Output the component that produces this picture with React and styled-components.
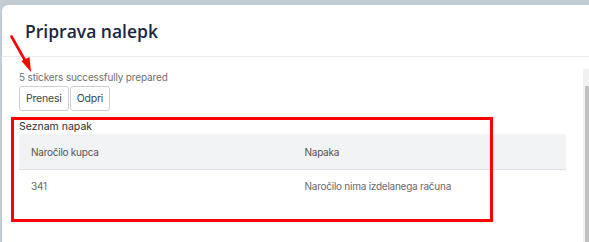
import React from "react";
import styled, { createGlobalStyle } from "styled-components";

const Global = createGlobalStyle`
  html, body { margin: 0; padding: 0; }
  body {
    background: #c3cbd4;
    font-family: Inter, "Open Sans", sans-serif;
    overflow: hidden;
  }
`;

const Stage = styled.div`
  position: relative;
  width: 589px;
  height: 242px;
  overflow: hidden;
  padding: 5px 0 0 2px;
  box-sizing: border-box;
`;

const Modal = styled.div`
  background: #ffffff;
  border-top-left-radius: 6px;
  height: 100%;
  display: flex;
  flex-direction: column;
`;

const Header = styled.div`
  height: 52px;
  border-bottom: 1px solid #e8e9eb;
  display: flex;
  align-items: center;
  padding-left: 23px;
  box-sizing: border-box;
  flex-shrink: 0;
`;

const Title = styled.h2`
  margin: 0;
  font-family: "Open Sans", sans-serif;
  font-size: 17.5px;
  font-weight: 600;
  color: #1c2640;
`;

const BodyRow = styled.div`
  display: flex;
  flex: 1;
`;

const Content = styled.div`
  flex: 1;
  padding: 13px 17px 0 17px;
`;

const Status = styled.div`
  font-size: 10px;
  letter-spacing: -0.15px;
  color: #6f6f6f;
  line-height: 14px;
`;

const ButtonGroup = styled.div`
  display: flex;
  gap: 1px;
  margin-top: 2px;
`;

const Button = styled.button`
  height: 25px;
  padding: 0 6px;
  background: #ffffff;
  border: 1px solid #cfcfcf;
  border-radius: 3px;
  font-family: Inter, sans-serif;
  font-size: 10.5px;
  letter-spacing: -0.2px;
  color: #444;
  cursor: pointer;
`;

const Section = styled.div`
  margin-top: 9px;
`;

const SectionLabel = styled.div`
  font-size: 10.5px;
  color: #2a2e33;
  line-height: 14px;
`;

const Table = styled.table`
  width: 547px;
  border-collapse: collapse;
  table-layout: fixed;
`;

const Th = styled.th`
  background: #f2f3f5;
  height: 35px;
  padding: 0 12px;
  text-align: left;
  font-weight: 400;
  font-size: 10px;
  letter-spacing: -0.25px;
  color: #555;
  border-bottom: 1px solid #dcdfe3;
`;

const Td = styled.td`
  height: 32px;
  padding: 0 12px;
  font-size: 10px;
  letter-spacing: -0.25px;
  color: #6a6a6a;
`;

const Track = styled.div`
  width: 6px;
  margin-top: 12px;
  background: #f1f1f1;
  display: flex;
  flex-direction: column;
  align-items: flex-end;
`;

const Thumb = styled.div`
  margin-top: 17px;
  width: 4px;
  flex: 1;
  background: #c1c1c1;
`;

const Highlight = styled.div`
  position: absolute;
  left: 11px;
  top: 117px;
  width: 482px;
  height: 105px;
  border: 3px solid #ff0000;
  box-sizing: border-box;
  pointer-events: none;
`;

const Arrow = styled.svg`
  position: absolute;
  left: 0;
  top: 0;
  pointer-events: none;
`;

export default function App() {
  return (
    <>
      <Global />
      <Stage>
        <Modal>
          <Header>
            <Title>Priprava nalepk</Title>
          </Header>
          <BodyRow>
            <Content>
              <Status>5 stickers successfully prepared</Status>
              <ButtonGroup>
                <Button>Prenesi</Button>
                <Button>Odpri</Button>
              </ButtonGroup>
              <Section>
                <SectionLabel>Seznam napak</SectionLabel>
                <Table>
                  <thead>
                    <tr>
                      <Th>Naročilo kupca</Th>
                      <Th>Napaka</Th>
                    </tr>
                  </thead>
                  <tbody>
                    <tr>
                      <Td>341</Td>
                      <Td>Naročilo nima izdelanega računa</Td>
                    </tr>
                  </tbody>
                </Table>
              </Section>
            </Content>
            <Track>
              <Thumb />
            </Track>
          </BodyRow>
        </Modal>
        <Highlight />
        <Arrow width="60" height="90" viewBox="0 0 60 90">
          <line x1="11.5" y1="36.5" x2="27" y2="64" stroke="#ff0000" strokeWidth="2.6" strokeLinecap="round" />
          <polygon points="31,72 21.5,61 29.5,57" fill="#ff0000" />
        </Arrow>
      </Stage>
    </>
  );
}
